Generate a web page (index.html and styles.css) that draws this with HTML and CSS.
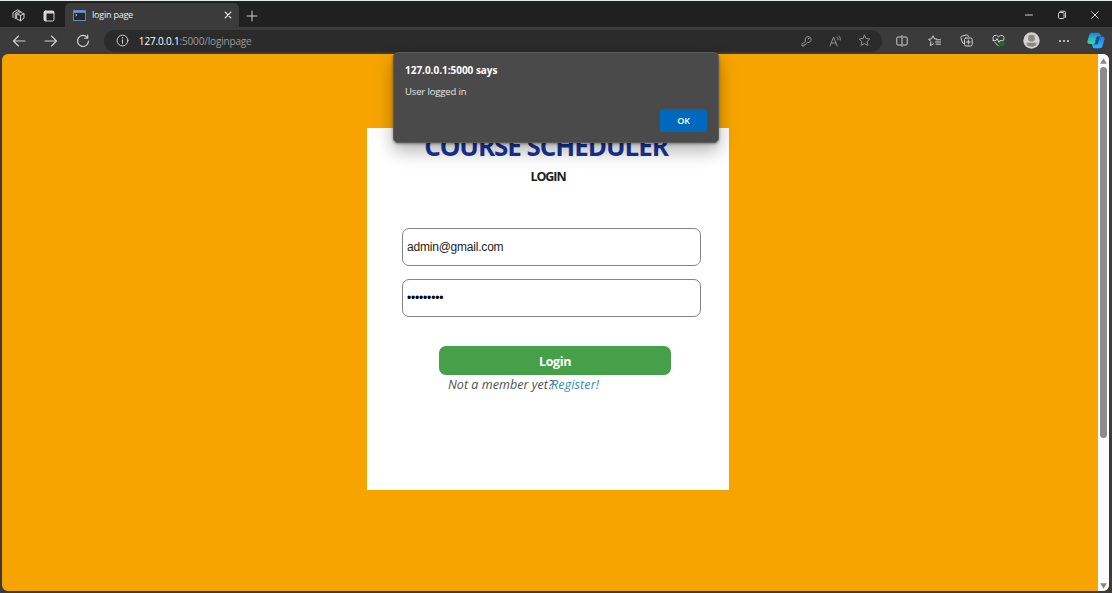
FILE: index.html
```html
<!DOCTYPE html>
<html lang="en">
<head>
<meta charset="utf-8">
<title>login page</title>
<link rel="stylesheet" href="styles.css">
</head>
<body>
<div class="browser">
  <header class="tabbar">
    <span class="slot workspaces"><svg class="icon" width="13" height="13" viewBox="0 0 13 13"><path d="M5 5 8.500 3.300 12 4.800V9L8.500 11.800 5 10ZM5 5l3.500 1.500v5.300M8.500 6.500 12 4.800M3.300 9.700V4.200L7 2l2 .8M1 8.500V3.500L5.500.8 7 1.500"/></svg></span>
    <span class="slot tabmenu"><svg class="icon" width="12" height="12" viewBox="0 0 12 12"><rect x="1" y="1" width="10" height="10" rx="1.500"/><path class="solid" d="M1 1h10v2.500H1ZM1 3h2.500v8H1Z"/></svg></span>
    <div class="tab">
      <svg class="favicon" width="13" height="11" viewBox="0 0 13 11"><rect x=".5" y=".5" width="12" height="10" fill="#252a32" stroke="#6588bc"/><path d="M1 1h11v1.800H1Z" fill="#7297d0"/><path d="m2.500 4 1.500 1-1.500 1" stroke="#ddd" fill="none" stroke-width=".8"/></svg>
      <span class="tab-title">login page</span>
      <svg class="icon bright" width="8" height="8" viewBox="0 0 8 8"><path d="m1.200 1.200 5.600 5.600M6.800 1.200 1.200 6.800"/></svg>
    </div>
    <span class="slot newtab"><svg class="icon" width="12" height="12" viewBox="0 0 12 12"><path d="M6 1v10M1 6h10"/></svg></span>
    <div class="window-buttons">
      <span><svg class="icon" width="10" height="10" viewBox="0 0 10 10"><path d="M1.500 5h7"/></svg></span>
      <span><svg class="icon" width="10" height="10" viewBox="0 0 10 10"><rect x="1.500" y="2.500" width="5.500" height="6" rx="1"/><path d="M3 1.200h4.300q1.200 0 1.200 1.200V7.500"/></svg></span>
      <span><svg class="icon" width="10" height="10" viewBox="0 0 10 10"><path d="m1.600 1.600 6.800 6.800M8.400 1.600 1.600 8.400"/></svg></span>
    </div>
  </header>

  <nav class="toolbar">
    <span class="nav-button"><svg class="icon" width="14" height="12" viewBox="0 0 14 12"><path d="M13 6H1.500M6.500 1l-5 5 5 5"/></svg></span>
    <span class="nav-button"><svg class="icon" width="14" height="12" viewBox="0 0 14 12"><path d="M1 6h11.500M7.500 1l5 5-5 5"/></svg></span>
    <span class="nav-button"><svg class="icon" width="14" height="14" viewBox="0 0 14 14"><path d="M11.300 3.500A5.500 5.500 0 1 0 12.500 7M11.700 1v3.200H8.500"/></svg></span>
    <div class="address">
      <svg class="icon" width="13" height="13" viewBox="0 0 13 13"><circle cx="6.500" cy="6.500" r="5.400"/><path d="M6.500 5.800v3.500M6.500 3.500v.5"/></svg>
      <span class="url"><b>127.0.0.1</b>:5000/loginpage</span>
      <span class="address-action"><svg class="icon" width="11" height="12" viewBox="0 0 11 12"><path d="M4.500 6.100A3 3 0 1 1 6.500 7.500L5.600 8.200 4.900 9.500 3.500 9.600 3 11H1V9.300Z"/><circle cx="7.500" cy="3.600" r=".35"/></svg></span>
      <span class="address-action"><svg class="icon" width="13" height="12" viewBox="0 0 13 12"><path d="M1 11 4.600 2 8.200 11M2.400 8h4.500M8 2.200q1.300 1 1.100 2.600M9.500.8Q12 2.500 11.400 5"/></svg></span>
      <span class="address-action"><svg class="icon" width="13" height="13" viewBox="0 0 13 13"><path d="m6.500 1.200 1.600 3.300 3.700.5-2.700 2.600.7 3.800-3.300-1.800-3.300 1.800.7-3.800L1.200 5l3.700-.5Z"/></svg></span>
    </div>
    <div class="actions">
      <span><svg class="icon" width="12" height="12" viewBox="0 0 12 12"><path d="M4.800 2H2Q.8 2 .8 3.200v5.600Q.8 10 2 10h2.800M7.200 2H10q1.200 0 1.200 1.200v5.600Q11.200 10 10 10H7.200M6 .5v11"/></svg></span>
      <span><svg class="icon" width="13" height="12" viewBox="0 0 13 12"><path d="M8.500 4 6.600 3.900 5 .8 3.500 3.900.6 4.300l2.300 2.300-.6 4L5.500 8.800M8.300 4.800h4.200M7.500 7h5M8 9.200h4.500"/></svg></span>
      <span><svg class="icon" width="13" height="13" viewBox="0 0 13 13"><rect x="4.500" y="4" width="7.700" height="8" rx="1.500"/><path d="M8.350 6v4M6.300 8h4.100M4 9.500 2.700 9 .8 3.700Q.6 2.700 1.500 2.300L6.500.9Q8 .7 8.500 2.500"/></svg></span>
      <span><svg class="icon" width="13" height="13" viewBox="0 0 13 13"><path d="M1.200 6Q.2 3 2.200 1.600 4.500.4 6.500 2.800 8.500.4 10.800 1.600 12.800 3 11.800 6M1 6.500h3l1-2 2 4 1-2h3M2.500 8 6.500 12"/><circle cx="10" cy="9.500" r="2.700" fill="#13751b" stroke="none"/></svg></span>
      <span><svg width="17" height="17" viewBox="0 0 17 17"><circle cx="8.500" cy="8.500" r="8.200" fill="#d3d0cd"/><circle cx="8.500" cy="6.200" r="3.400" fill="#8c8783"/><path d="M3.300 10.700h10.400q-.3 4-5.200 4t-5.200-4Z" fill="#8c8783"/></svg></span>
      <span><svg width="12" height="4" viewBox="0 0 12 4" fill="#ddd"><circle cx="2" cy="2" r="1"/><circle cx="6" cy="2" r="1"/><circle cx="10" cy="2" r="1"/></svg></span>
      <span><svg width="18" height="17" viewBox="0 0 18 17"><defs><linearGradient id="leaf" x2="0" y2="1"><stop stop-color="#1681d8"/><stop offset=".5" stop-color="#23b8d0"/><stop offset="1" stop-color="#4fd477"/></linearGradient><linearGradient id="wing" x2="0" y2="1"><stop stop-color="#2078df"/><stop offset="1" stop-color="#27b9ff"/></linearGradient></defs><path d="M4.500.8H11q2 0 2.500 2L14 4.500H11q-1.500 0-2 2L7.500 12H2.500Q-.2 12 .5 9L2.300 2.700Q2.800.8 4.500.8Z" fill="url(#leaf)"/><path d="M12.500 4.500h3q2.500 0 2 2.500l-2 7q-.7 2.200-2.500 2.200H7.500q-1.600 0-2-2L5 12h1.500q1.500 0 2-2L10 4.500Z" fill="url(#wing)"/><path d="M10 4.500h3L11 11q-.5 1.500-2 1.500H6.500q1.500 0 2-2Z" fill="#164b91"/></svg></span>
    </div>
  </nav>

  <div class="viewport">
    <main class="page">
      <form class="card">
        <h1>COURSE SCHEDULER</h1>
        <h2>LOGIN</h2>
        <input class="field email" type="text" value="admin@gmail.com" aria-label="Email">
        <div class="field password">•••••••••</div>
        <button class="login" type="button">Login</button>
        <p class="member"><span>Not a member yet?</span><a>Register!</a></p>
      </form>
    </main>
    <aside class="scrollbar">
      <svg width="7" height="6" viewBox="0 0 7 6"><path d="M3.500.3 6.800 5.700H.2Z"/></svg>
      <div class="thumb"></div>
      <svg class="down" width="7" height="6" viewBox="0 0 7 6"><path d="M.2.3h6.600L3.500 5.700Z"/></svg>
    </aside>
  </div>

  <section class="dialog" role="dialog">
    <strong>127.0.0.1:5000 says</strong>
    <p>User logged in</p>
    <button class="ok" type="button">OK</button>
  </section>
</div>
</body>
</html>
```

FILE: styles.css
```css
* { box-sizing: border-box; }
body { margin: 0; overflow: hidden; font-family: "Open Sans", "Noto Sans", sans-serif; }
h1, h2, p { margin: 0; }
svg { display: block; flex: none; }

.browser { position: relative; display: flex; flex-direction: column; width: 1112px; height: 593px; background: #3b3b3b; border-top: 1px solid #e4eaea; }
.icon { fill: none; stroke: #d0d0d0; stroke-width: 1; stroke-linecap: round; stroke-linejoin: round; }
.bright { stroke: #f0f0f0; stroke-width: 1.200; }
.solid { fill: #d8d8d8; stroke: none; }

.tabbar { display: flex; height: 26px; background: #202020; border-top: 1px solid #1c2626; }
.slot { display: flex; align-items: center; justify-content: center; padding-top: 2px; }
.workspaces { width: 36px; }
.tabmenu { width: 25px; }
.tab { display: flex; align-items: center; width: 174px; margin: 1px 0 0 4px; padding: 0 7px 0 8px; background: #3b3b3b; border-radius: 5px 5px 0 0; }
.tab-title { flex: 1; margin-left: 6px; font-size: 9px; line-height: 12px; color: #f0f0f0; letter-spacing: -.22px; }
.newtab { width: 25px; }
.window-buttons { display: flex; margin-left: auto; padding-right: 1px; }
.window-buttons span { display: flex; width: 33px; align-items: center; justify-content: center; padding-top: 1px; }

.toolbar { display: flex; height: 27px; padding-left: 3px; align-items: center; }
.nav-button { display: flex; width: 32px; justify-content: center; }
.nav-button .icon { stroke-width: 1.150; }
.address { display: flex; width: 779px; height: 22px; margin-left: 5px; padding: 0 3px 0 12px; align-items: center; border-radius: 11px; background: #2b2b2b; }
.url { flex: 1; margin-left: 10px; font-size: 10px; line-height: 14px; color: #9a9a9a; letter-spacing: -.17px; }
.url b { font-weight: 400; color: #fff; }
.address-action { display: flex; width: 29px; justify-content: center; }
.address-action .icon { stroke: #939393; }
.actions { display: flex; margin-left: 4px; }
.actions span { display: flex; width: 32.300px; height: 20px; align-items: center; justify-content: center; }

.viewport { display: flex; width: 1107px; height: 537px; margin-left: 2px; overflow: hidden; border-radius: 6px; background: #f7a400; }
.page { flex: 1; padding: 74px 0 0 364.500px; }
.card { display: flex; flex-direction: column; width: 362.500px; height: 362px; padding: 0 28px 0 35.500px; background: #fff; }
.card h1 { width: 288px; margin-top: 1px; font-size: 26px; line-height: 34px; color: #18349b; letter-spacing: -1.050px; text-align: center; white-space: nowrap; }
.card h2 { width: 292px; margin-top: 5px; font-size: 12.500px; line-height: 17px; color: #202020; letter-spacing: -1.050px; text-align: center; }
.field { width: 299px; height: 38px; padding: 0 4px; border: 1px solid #858585; border-radius: 7px; background: #fff; color: #222; font: 12px "Liberation Sans", Arial, sans-serif; }
.email { margin-top: 43px; letter-spacing: -.21px; }
.password { display: flex; align-items: center; margin-top: 13px; color: #000; letter-spacing: -.18px; }
.login { width: 232px; height: 29px; margin: 29px 0 0 37px; padding-top: 2px; border: 0; border-radius: 7px; background: #46a049; color: #fff; font: bold 12.500px "Open Sans", sans-serif; letter-spacing: -.36px; }
.member { display: flex; margin: 1px 0 0 46px; font-size: 12.500px; font-style: italic; line-height: 17px; color: #505050; white-space: nowrap; letter-spacing: .04px; }
.member span { width: 103px; }
.member a { color: #3489bf; letter-spacing: .13px; }

.scrollbar { display: flex; flex-direction: column; align-items: center; width: 11px; padding: 4px 0 2px; background: #fcfcfc; }
.scrollbar svg { fill: #858585; }
.thumb { width: 7px; height: 371px; margin-top: 3px; border-radius: 4px; background: #8b8b8b; }
.scrollbar .down { margin-top: auto; }

.dialog { position: absolute; top: 51px; left: 393px; display: flex; flex-direction: column; width: 326px; height: 91px; padding: 10px 11px; border: 1px solid #5c5c5c; border-radius: 5px; background: #4a4a4a; color: #fff; box-shadow: 0 8px 18px rgba(0,0,0,.3), 0 1px 3px rgba(0,0,0,.4); }
.dialog strong { font-size: 10px; line-height: 14px; letter-spacing: -.02px; }
.dialog p { margin-top: 8px; font-size: 9.500px; line-height: 13px; color: #e8e8e8; letter-spacing: -.15px; }
.ok { width: 47px; height: 23px; margin: 11px 0 0 auto; border: 0; border-radius: 3px; background: #0069bd; color: #fff; font: 600 9px "Open Sans", sans-serif; letter-spacing: -.25px; }
```
